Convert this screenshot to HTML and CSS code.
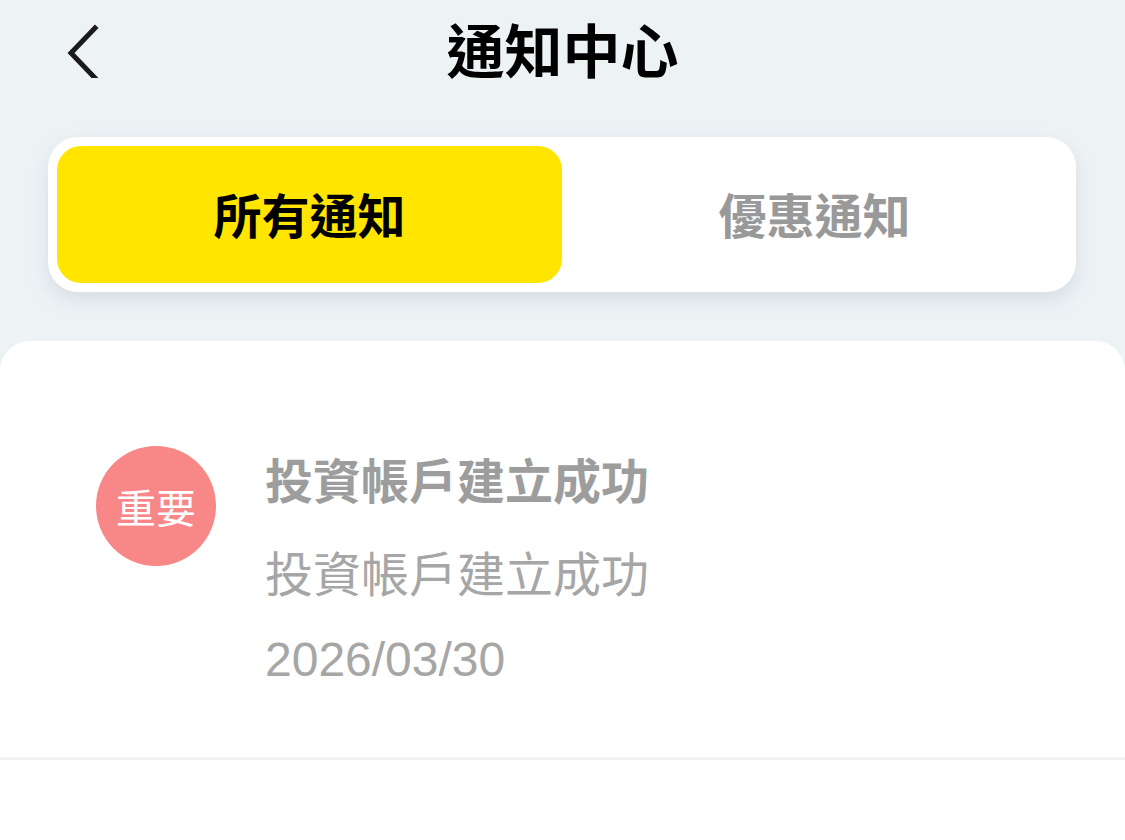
FILE: index.html
```html
<!DOCTYPE html>
<html lang="zh-Hant">
<head>
<meta charset="utf-8">
<title>通知中心</title>
<link rel="stylesheet" href="styles.css">
</head>
<body>
<div class="page">
  <header class="topbar">
    <div class="back">
      <svg width="40" height="60" viewBox="0 0 40 60" aria-hidden="true">
        <path d="M31 10 L7 35 L31 60" fill="none" stroke="#1a1a1a" stroke-width="5" stroke-linecap="square" stroke-linejoin="miter"/>
      </svg>
    </div>
    <h1 class="title">通知中心</h1>
    <div></div>
  </header>

  <nav class="tabs">
    <div class="tab active">所有通知</div>
    <div class="tab">優惠通知</div>
  </nav>

  <section class="card">
    <div class="item">
      <div class="badge">重要</div>
      <div class="texts">
        <div class="item-title">投資帳戶建立成功</div>
        <div class="item-body">投資帳戶建立成功</div>
        <div class="item-date">2026/03/30</div>
      </div>
    </div>
    <div class="divider"></div>
  </section>
</div>
</body>
</html>
```

FILE: styles.css
```css
html, body {
  margin: 0;
  padding: 0;
}
body {
  background: #edf2f5;
  font-family: "Liberation Sans", "Noto Sans CJK TC", sans-serif;
  width: 1125px;
  height: 840px;
  overflow: hidden;
}
.page {
  display: flex;
  flex-direction: column;
  height: 840px;
}
.topbar {
  height: 105px;
  display: grid;
  grid-template-columns: 1fr auto 1fr;
  align-items: center;
}
.back {
  padding-left: 64px;
  display: flex;
  align-items: center;
  height: 105px;
  box-sizing: border-box;
}
.back svg {
  display: block;
  margin-top: -10px;
}
.title {
  margin: -10px 0 0 0;
  font-family: "Noto Sans CJK TC", sans-serif;
  font-size: 58px;
  font-weight: 700;
  color: #000;
  line-height: 1;
  letter-spacing: 0;
}
.tabs {
  margin: 32px 49px 0 48px;
  height: 155px;
  box-sizing: border-box;
  padding: 9px;
  background: #fff;
  border-radius: 30px;
  box-shadow: 0 8px 18px rgba(160, 170, 185, 0.28);
  display: grid;
  grid-template-columns: 1fr 1fr;
}
.tab {
  display: flex;
  align-items: center;
  justify-content: center;
  font-family: "Noto Sans CJK TC", sans-serif;
  font-size: 48px;
  font-weight: 700;
  color: #999;
  border-radius: 24px;
  padding-bottom: 4px;
}
.tab.active {
  background: #ffe500;
  color: #000;
}
.card {
  margin-top: 49px;
  flex: 1;
  background: #fff;
  border-radius: 30px 30px 0 0;
}
.item {
  display: flex;
  align-items: flex-start;
  padding: 105px 0 0 96px;
  gap: 49px;
  height: 416px;
  box-sizing: border-box;
}
.badge {
  width: 120px;
  height: 120px;
  border-radius: 50%;
  background: #f88787;
  color: #fff;
  font-family: "Noto Sans CJK TC", sans-serif;
  font-size: 40px;
  display: flex;
  align-items: center;
  justify-content: center;
  flex-shrink: 0;
}
.texts {
  display: flex;
  flex-direction: column;
  padding-top: 0;
}
.item-title {
  font-family: "Noto Sans CJK TC", sans-serif;
  font-size: 48px;
  font-weight: 700;
  color: #9d9d9d;
  line-height: 64px;
}
.item-body {
  margin-top: 29px;
  font-family: "Noto Sans CJK TC", sans-serif;
  font-size: 48px;
  color: #a6a6a6;
  line-height: 64px;
}
.item-date {
  margin-top: 25px;
  font-size: 48px;
  color: #a6a6a6;
  line-height: 64px;
}
.divider {
  height: 3px;
  background: #f2f2f2;
}
```
